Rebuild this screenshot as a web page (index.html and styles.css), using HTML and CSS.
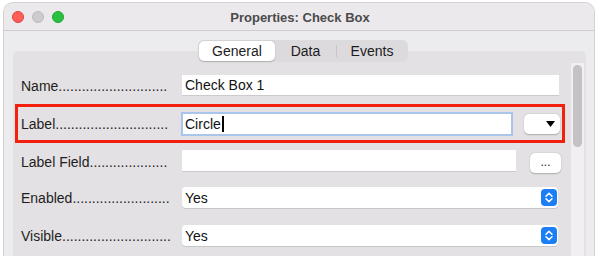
FILE: index.html
```html
<!DOCTYPE html>
<html>
<head>
<meta charset="utf-8">
<link rel="stylesheet" href="styles.css">
</head>
<body>
<div class="window">
  <div class="titlebar">
    <div class="lights">
      <span class="light red"></span>
      <span class="light gray"></span>
      <span class="light green"></span>
    </div>
    <div class="title">Properties: Check Box</div>
    <div></div>
  </div>
  <div class="content">
    <div class="tabs">
      <div class="seg">
        <span class="tab tab-general active">General</span>
        <span class="tab tab-data">Data</span>
        <span class="sep"></span>
        <span class="tab tab-events">Events</span>
      </div>
    </div>
    <div class="panel">
      <div class="rows">
        <div class="row row-name">
          <div class="label">Name............................</div>
          <div class="field field-name">Check Box 1</div>
        </div>
        <div class="row row-label">
          <div class="label">Label.............................</div>
          <div class="field field-focus">Circle<span class="caret"></span></div>
          <div class="btn btn-drop"><svg width="9" height="6" viewBox="0 0 9 6"><path d="M0 0H9L4.5 6Z" fill="#000"/></svg></div>
        </div>
        <div class="row row-field">
          <div class="label">Label Field....................</div>
          <div class="field field-lf"></div>
          <div class="btn btn-dots">...</div>
        </div>
        <div class="row row-enabled">
          <div class="label">Enabled.........................</div>
          <div class="select"><span class="sel-text">Yes</span><span class="stepper"><svg width="16" height="17" viewBox="0 0 16 17"><path d="M5 7.2L8 4.4L11 7.2M5 9.8L8 12.6L11 9.8" fill="none" stroke="#fff" stroke-width="1.5" stroke-linecap="round" stroke-linejoin="round"/></svg></span></div>
        </div>
        <div class="row row-visible">
          <div class="label">Visible............................</div>
          <div class="select"><span class="sel-text">Yes</span><span class="stepper"><svg width="16" height="17" viewBox="0 0 16 17"><path d="M5 7.2L8 4.4L11 7.2M5 9.8L8 12.6L11 9.8" fill="none" stroke="#fff" stroke-width="1.5" stroke-linecap="round" stroke-linejoin="round"/></svg></span></div>
        </div>
      </div>
      <div class="scrollbar"><div class="thumb"></div></div>
    </div>
  </div>
</div>
</body>
</html>
```

FILE: styles.css
```css
html, body {
  margin: 0;
  padding: 0;
  background: #ffffff;
  overflow: hidden;
}
body {
  font-family: "Liberation Sans", Arial, sans-serif;
  color: #1c1c1e;
}
.window {
  margin: 2px 0 0 3px;
  width: 592px;
  height: 254px;
  box-sizing: border-box;
  border: 1px solid #d3d1d4;
  border-bottom: none;
  border-radius: 10px 10px 0 0;
  background: #ecebed;
  overflow: hidden;
}
.titlebar {
  height: 27px;
  border-bottom: 1px solid #cfcdd0;
  background: #ebe9eb;
  display: grid;
  grid-template-columns: 1fr auto 1fr;
  align-items: center;
}
.lights {
  display: flex;
  gap: 8px;
  padding-left: 8px;
  padding-top: 1px;
}
.light {
  width: 12px;
  height: 12px;
  border-radius: 50%;
  box-sizing: border-box;
}
.red { background: #fe5f57; border: 0.5px solid #e0443e; }
.gray { background: #cdcbcd; border: 0.5px solid #bcbabc; }
.green { background: #29c13f; border: 0.5px solid #1ea830; }
.title {
  font-size: 13px;
  font-weight: bold;
  color: #4b4a4c;
  padding-left: 2px;
  padding-top: 1px;
}
.content {
  padding: 9px 8px 0 9px;
}
.tabs {
  display: flex;
  position: relative;
  z-index: 1;
}
.seg {
  margin-left: 185px;
  height: 22px;
  box-sizing: border-box;
  padding: 1px;
  background: #dcdadd;
  border-radius: 6px;
  display: flex;
  align-items: center;
}
.tab {
  font-size: 14px;
  height: 20px;
  display: flex;
  align-items: center;
  justify-content: center;
  color: #1c1c1e;
}
.tab-general { width: 76px; }
.tab-data { width: 61px; }
.tab-events { width: 70px; }
.tab.active {
  background: #ffffff;
  border-radius: 5px;
  box-shadow: 0 0.5px 1.5px rgba(0,0,0,0.22);
}
.sep {
  width: 1px;
  height: 12px;
  background: #c8c6c9;
}
.panel {
  margin-top: -11px;
  height: 214px;
  background: #e3e1e4;
  border-radius: 5px 5px 0 0;
  display: flex;
}
.rows {
  flex: 1;
  padding-left: 8px;
  display: flex;
  flex-direction: column;
}
.row {
  display: flex;
  align-items: center;
  flex: none;
}
.label {
  width: 161px;
  flex: none;
  font-size: 14px;
  white-space: nowrap;
  overflow: hidden;
  color: #1e1e20;
}
.row-name { margin-top: 24px; height: 21px; }
.row-label {
  margin-top: 8px;
  margin-left: -6px;
  width: 550px;
  height: 39px;
  box-sizing: border-box;
  border: 3px solid #f2200d;
  padding-left: 3px;
}
.row-field { margin-top: 7px; height: 23px; }
.row-enabled { margin-top: 14px; height: 21px; }
.row-visible { margin-top: 17px; height: 21px; }
.field {
  background: #ffffff;
  font-size: 14px;
  box-sizing: border-box;
  padding-left: 3px;
  display: flex;
  align-items: center;
  border-bottom: 1px solid #cdcacd;
  color: #111;
}
.field-name { width: 377px; height: 21px; }
.field-focus {
  margin-left: -1px;
  width: 332px;
  height: 24px;
  border: 2px solid #a9c6ea;
  padding-left: 2px;
}
.caret {
  display: inline-block;
  width: 2px;
  height: 16px;
  background: #000;
  margin-left: 1px;
}
.field-lf {
  width: 334px;
  height: 22px;
  align-self: flex-start;
}
.btn {
  background: #ffffff;
  border-radius: 5px;
  box-shadow: 0 0.5px 1.5px rgba(0,0,0,0.25);
  height: 20px;
  display: flex;
  align-items: center;
}
.btn-drop {
  margin-left: 11px;
  width: 36px;
  justify-content: flex-end;
  padding-right: 5px;
  box-sizing: border-box;
}
.btn-dots {
  margin-left: 14px;
  width: 31px;
  justify-content: center;
  align-self: flex-end;
  font-size: 12px;
  color: #222;
  padding-bottom: 2px;
  box-sizing: border-box;
}
.select {
  width: 376px;
  height: 21px;
  background: #ffffff;
  border-radius: 4px;
  box-shadow: 0 1px 0 #c9c6ca;
  display: flex;
  align-items: center;
  justify-content: space-between;
}
.sel-text {
  font-size: 14px;
  padding-left: 3px;
  color: #111;
}
.stepper {
  width: 16px;
  height: 17px;
  margin-right: 1px;
  background: #1c7ef4;
  border-radius: 4px;
  display: flex;
}
.scrollbar {
  width: 13px;
  margin: 12px 2px 0 0;
  background: #f1eff2;
  padding: 2px 2px 0 2px;
  box-sizing: border-box;
}
.thumb {
  width: 9px;
  height: 82px;
  background: #c4c2c5;
  border-radius: 5px;
}
```
